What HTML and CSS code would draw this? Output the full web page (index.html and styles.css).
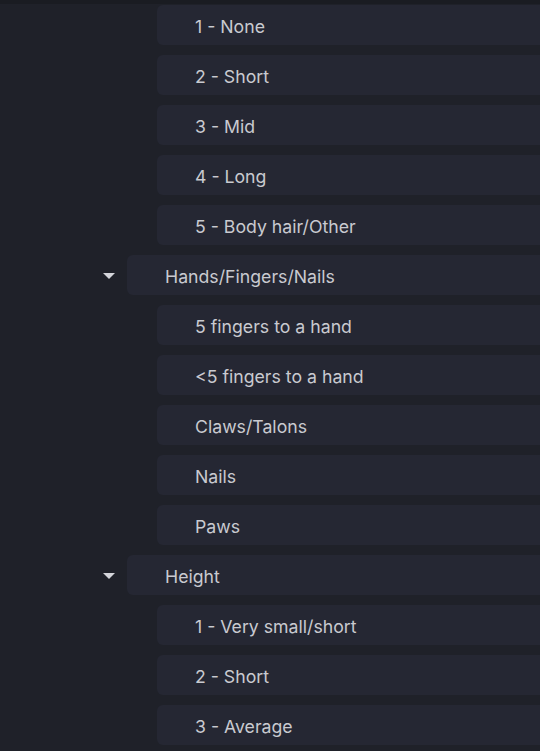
FILE: index.html
```html
<!DOCTYPE html>
<html>
<head>
<meta charset="utf-8">
<link rel="stylesheet" href="styles.css">
</head>
<body>
<div class="topband"></div>
<ul class="tree">
  <li class="row child"><span class="box">1 - None</span></li>
  <li class="row child"><span class="box">2 - Short</span></li>
  <li class="row child"><span class="box">3 - Mid</span></li>
  <li class="row child"><span class="box">4 - Long</span></li>
  <li class="row child"><span class="box">5 - Body hair/Other</span></li>
  <li class="row group"><span class="caret"></span><span class="box">Hands/Fingers/Nails</span></li>
  <li class="row child"><span class="box">5 fingers to a hand</span></li>
  <li class="row child"><span class="box">&lt;5 fingers to a hand</span></li>
  <li class="row child"><span class="box">Claws/Talons</span></li>
  <li class="row child"><span class="box">Nails</span></li>
  <li class="row child"><span class="box">Paws</span></li>
  <li class="row group"><span class="caret"></span><span class="box">Height</span></li>
  <li class="row child"><span class="box">1 - Very small/short</span></li>
  <li class="row child"><span class="box">2 - Short</span></li>
  <li class="row child"><span class="box">3 - Average</span></li>
</ul>
</body>
</html>
```
FILE: styles.css
```css
html, body {
  margin: 0;
  padding: 0;
  background: #1f2129;
  height: 100%;
  overflow: hidden;
}
body {
  font-family: Inter, "Noto Sans", sans-serif;
  font-size: 17.7px;
  font-weight: 400;
  color: #c9cad0;
}
.topband {
  height: 4px;
  background: #1a1c22;
}
.tree {
  list-style: none;
  margin: 0;
  padding: 1px 0 0 0;
  display: flex;
  flex-direction: column;
  gap: 10px;
}
.row {
  display: flex;
  align-items: center;
  height: 40px;
}
.child {
  padding-left: 157px;
}
.group {
  padding-left: 103px;
}
.caret {
  width: 0;
  height: 0;
  border-left: 6px solid transparent;
  border-right: 6px solid transparent;
  border-top: 6px solid #d4d5da;
  margin-right: 12px;
  margin-top: 1px;
}
.box {
  flex: 1;
  height: 40px;
  display: flex;
  align-items: center;
  padding-left: 38px;
  padding-top: 3px;
  background: #252733;
  border-radius: 6px 0 0 6px;
  box-sizing: border-box;
}
```
